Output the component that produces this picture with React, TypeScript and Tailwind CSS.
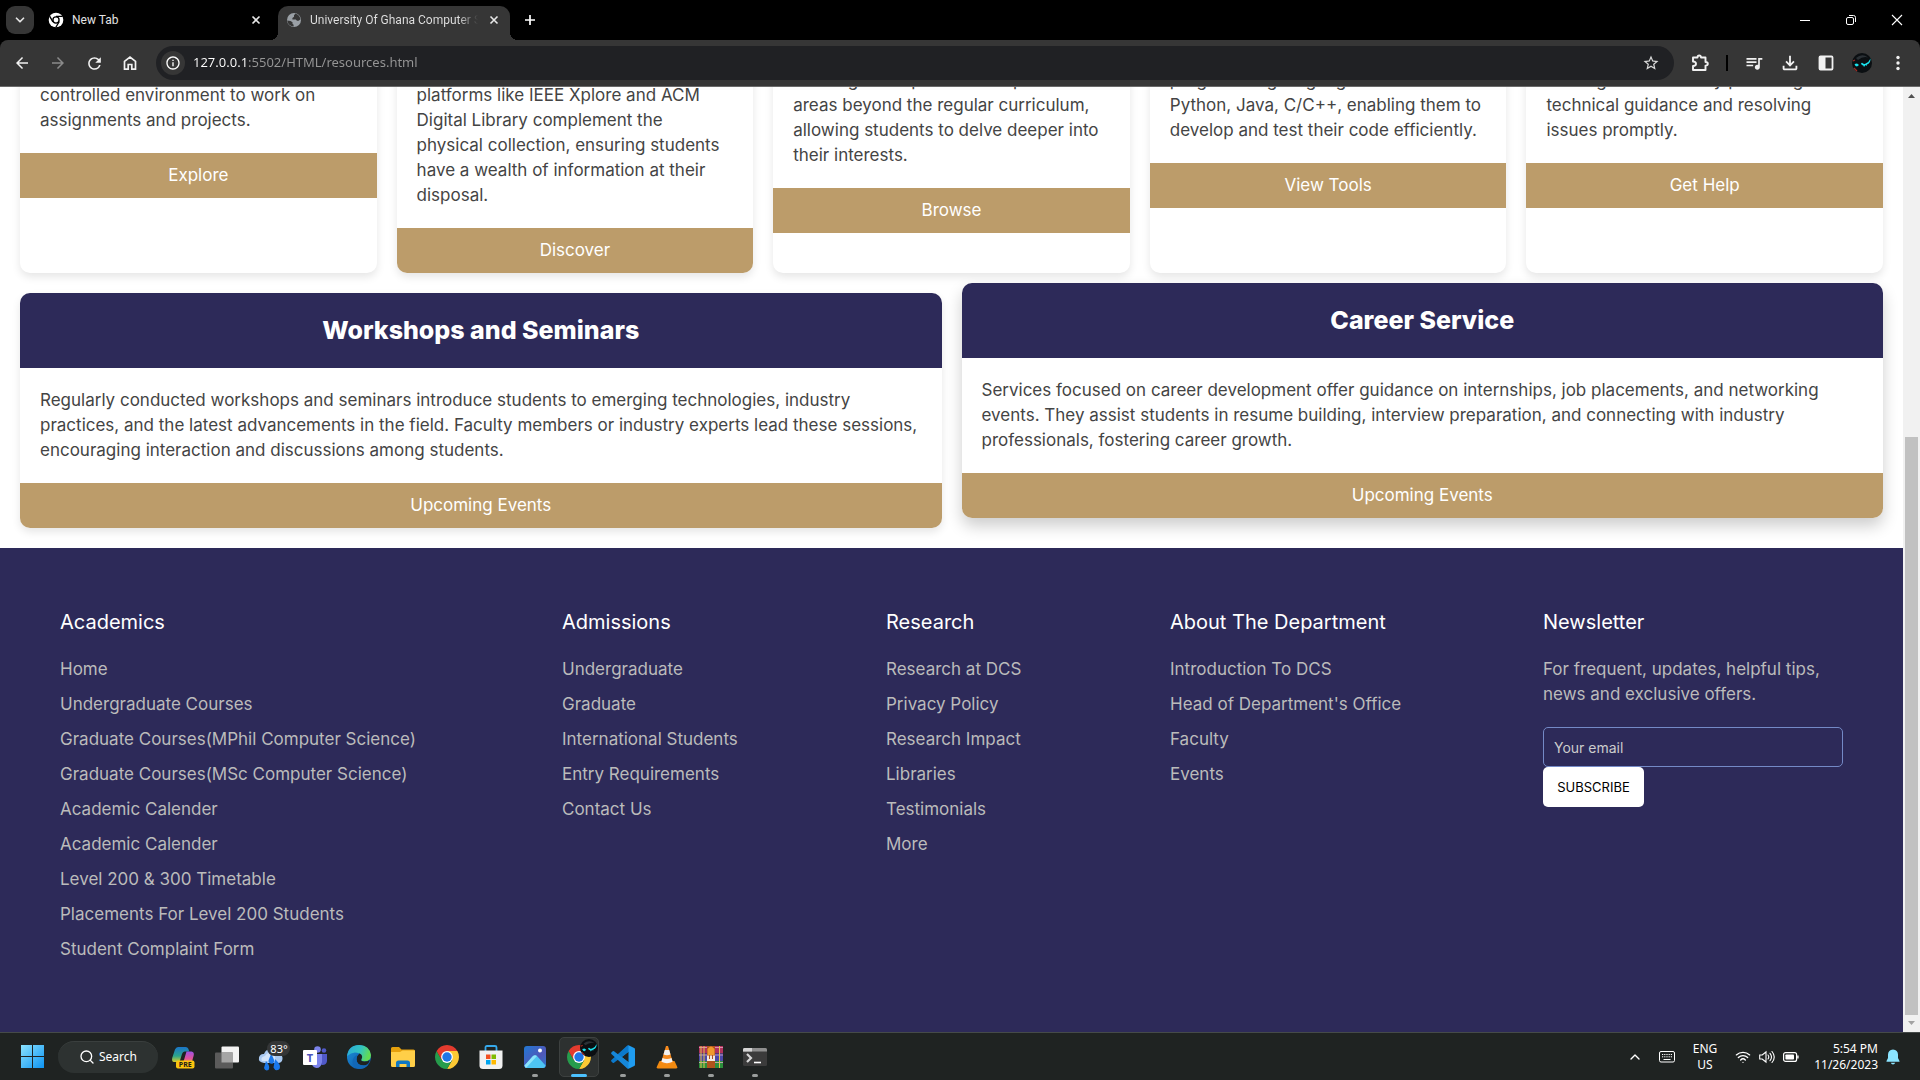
import type { ReactNode } from "react";
import { MdArrowBack, MdArrowForward, MdInfoOutline, MdOutlineFileDownload, MdQueueMusic, MdRefresh, MdStarBorder } from "react-icons/md";
import { ChevronDown, ChevronUp, Search, Wifi } from "lucide-react";

/* ---------- Browser chrome ---------- */

function ChromeMono() {
  return (
    <svg viewBox="0 0 24 24" className="size-4" aria-hidden="true">
      <circle cx="12" cy="12" r="11" fill="#fff" />
      <circle cx="12" cy="12" r="4.6" fill="#fff" stroke="#000" strokeWidth="2" />
      <path d="M12 6.6H22M7.4 14.8 2.4 6.2M16.7 14.6 11.6 23.3" stroke="#000" strokeWidth="2" />
    </svg>
  );
}

function Globe() {
  return (
    <svg viewBox="0 0 16 16" className="size-4" aria-hidden="true">
      <circle cx="8" cy="8" r="7" fill="#9aa0a6" />
      <path d="M9.5 1.6 8 3.2v1.6L6.4 6v1.4h3.4l1.2 1.4h1.6l1.8-1.2A7 7 0 0 0 9.5 1.6ZM1.3 8.5l3.2.4 2 1.4v1.5l1.1 1v1.8A6.4 6.4 0 0 1 1.3 8.5Z" fill="#363636" />
    </svg>
  );
}

function CloseIcon() {
  return (
    <svg viewBox="0 0 10 10" className="size-2.5" aria-hidden="true">
      <path d="M1.5 1.5 8.5 8.5M8.5 1.5 1.5 8.5" stroke="#e8e8e8" strokeWidth="1.6" />
    </svg>
  );
}

function TabStrip() {
  return (
    <header className="flex h-10 shrink-0 items-stretch bg-black font-['Roboto',sans-serif] text-xs text-[#e3e3e3]">
      <button aria-label="Search tabs" className="mt-1.5 ml-1.5 flex size-7 items-center justify-center rounded-[9px] bg-[#363636]">
        <ChevronDown className="size-3.5" strokeWidth={3} />
      </button>
      <div className="ml-3.5 flex w-[230px] items-center pr-[17px]">
        <ChromeMono />
        <button className="ml-2 flex-1 text-left">New Tab</button>
        <button aria-label="Close New Tab"><CloseIcon /></button>
      </div>
      <div className="relative mt-1.5 flex w-[232px] items-center rounded-t-[10px] bg-[#363636] pr-[11px] pb-1.5 pl-2">
        <span className="absolute bottom-0 -left-2 size-2 bg-[radial-gradient(circle_at_0_0,#000_8px,#363636_8px)]" />
        <span className="absolute -right-2 bottom-0 size-2 bg-[radial-gradient(circle_at_100%_0,#000_8px,#363636_8px)]" />
        <Globe />
        <button className="ml-2 flex-1 overflow-hidden bg-[linear-gradient(90deg,#e3e3e3_148px,transparent_168px)] bg-clip-text text-left whitespace-nowrap text-transparent">
          University Of Ghana Computer S
        </button>
        <button aria-label="Close University Of Ghana" className="ml-2"><CloseIcon /></button>
      </div>
      <button aria-label="New tab" className="ml-[14px] w-3">
        <svg viewBox="0 0 12 12" className="size-3" aria-hidden="true">
          <path d="M6 1v10M1 6h10" stroke="#fff" strokeWidth="1.7" />
        </svg>
      </button>
      <div className="ml-auto flex">
        <button aria-label="Minimize" className="flex w-[46px] items-center justify-center">
          <svg viewBox="0 0 10 10" className="size-2.5" aria-hidden="true"><path d="M0 5.5h10" stroke="#fff" /></svg>
        </button>
        <button aria-label="Restore" className="flex w-[46px] items-center justify-center">
          <svg viewBox="0 0 12 12" className="size-3" fill="none" stroke="#fff" aria-hidden="true">
            <rect x="1.5" y="3.5" width="7" height="7" rx="1.5" />
            <path d="M4 1.5h4.5a2 2 0 0 1 2 2V8" />
          </svg>
        </button>
        <button aria-label="Close window" className="flex w-[46px] items-center justify-center">
          <svg viewBox="0 0 12 12" className="size-3" aria-hidden="true"><path d="M1 1 11 11M11 1 1 11" stroke="#fff" strokeWidth="1.1" /></svg>
        </button>
      </div>
    </header>
  );
}

function ToolButton({ label, children }: { label: string; children: ReactNode }) {
  return (
    <button aria-label={label} className="flex h-8 w-9 items-center justify-center text-[#f1f1f1]">
      {children}
    </button>
  );
}

function Avatar() {
  return (
    <svg viewBox="0 0 20 20" className="size-5" aria-hidden="true">
      <circle cx="10" cy="10" r="10" fill="#0b0f12" />
      <path d="M4 5Q10 0 16 4.500Q11 3 6 7Z" fill="#2b3136" />
      <path d="M9 10.500Q10 9 11 10.500 12.500 11.500 14.500 10 16.500 9.500 18.500 5.500 18.500 10.500 15 11.500L14.500 13 13.500 12 12 14 11.300 12.500Q9.500 12.500 9 10.500Z" fill="#19e3ee" />
      <path d="M2.500 11 5 10.500 7 12 5 13.500 3.500 13Z" fill="#19e3ee" />
      <path d="M1 8 3 7M2 15 5 18" stroke="#a02a22" strokeWidth="1.200" />
    </svg>
  );
}

function Toolbar() {
  return (
    <div className="shrink-0 bg-black">
      <div className="flex h-[47px] items-center rounded-t-lg border-b border-[#6a6a6a] bg-[#363636] px-1">
        <ToolButton label="Back"><MdArrowBack className="size-[18px]" /></ToolButton>
        <button aria-label="Forward" disabled className="flex h-8 w-9 items-center justify-center text-[#8a8a8a]">
          <MdArrowForward className="size-[18px]" />
        </button>
        <ToolButton label="Reload"><MdRefresh className="size-[19px]" /></ToolButton>
        <ToolButton label="Home">
          <svg viewBox="0 0 16 16" className="size-4" fill="none" stroke="currentColor" strokeWidth="1.700" aria-hidden="true">
            <path d="M2.500 14.200V6.300L8 2l5.500 4.300v7.900H9.800V9.500H6.200v4.700Z" />
          </svg>
        </ToolButton>
        <div className="ml-2 flex h-[34px] flex-1 items-center rounded-full bg-[#202124] px-[5px]">
          <button aria-label="View site information" className="flex size-6 items-center justify-center rounded-full bg-[#363636] text-white">
            <MdInfoOutline className="size-4" />
          </button>
          <input
            aria-label="Address"
            defaultValue="127.0.0.1:5502/HTML/resources.html"
            className="ml-2 flex-1 bg-[linear-gradient(90deg,#fff_55px,#969696_55px)] bg-clip-text text-[13px] text-transparent outline-none"
          />
          <button aria-label="Bookmark this tab" className="flex w-9 items-center justify-center text-[#dadada]">
            <MdStarBorder className="size-[18px]" />
          </button>
        </div>
        <div className="ml-2 flex items-center">
          <ToolButton label="Extensions">
            <svg viewBox="0 0 20 20" className="size-5" fill="none" stroke="currentColor" strokeWidth="1.900" strokeLinejoin="round" aria-hidden="true">
              <path d="M3 4.500H7.500Q7.500 2.500 9.200 2.500T11 4.500H15.500V9Q17.800 9 17.800 10.800T15.500 12.600V17H3V13Q6 13 6 10.800T3 8.500Z" />
            </svg>
          </ToolButton>
          <span className="mx-2 h-4 w-0.5 bg-black" />
          <ToolButton label="Media controls"><MdQueueMusic className="size-5" /></ToolButton>
          <ToolButton label="Downloads"><MdOutlineFileDownload className="size-[22px]" /></ToolButton>
          <ToolButton label="Side panel">
            <svg viewBox="0 0 16 16" className="size-4" aria-hidden="true">
              <rect x="1.500" y="1.500" width="13" height="13" rx="1" fill="none" stroke="currentColor" strokeWidth="1.800" />
              <path d="M1.500 1.500H7.500V14.500H1.500Z" fill="currentColor" />
            </svg>
          </ToolButton>
          <ToolButton label="Profile"><Avatar /></ToolButton>
          <ToolButton label="Menu">
            <svg viewBox="0 0 16 16" className="size-4" fill="currentColor" aria-hidden="true">
              <circle cx="8" cy="2.500" r="1.700" /><circle cx="8" cy="8" r="1.700" /><circle cx="8" cy="13.500" r="1.700" />
            </svg>
          </ToolButton>
        </div>
      </div>
    </div>
  );
}

/* ---------- Page ---------- */

const resources = [
  { lines: ["controlled environment to work on", "assignments and projects."], action: "Explore", raised: false },
  {
    lines: ["platforms like IEEE Xplore and ACM", "Digital Library complement the", "physical collection, ensuring students", "have a wealth of information at their", "disposal."],
    action: "Discover",
    raised: false,
  },
  { lines: ["learning on a specialised topic", "areas beyond the regular curriculum,", "allowing students to delve deeper into", "their interests."], action: "Browse", raised: true },
  { lines: ["programming languages like", "Python, Java, C/C++, enabling them to", "develop and test their code efficiently."], action: "View Tools", raised: true },
  { lines: ["training students daily providing", "technical guidance and resolving", "issues promptly."], action: "Get Help", raised: true },
];

const programmes = [
  {
    title: "Workshops and Seminars",
    lines: [
      "Regularly conducted workshops and seminars introduce students to emerging technologies, industry",
      "practices, and the latest advancements in the field. Faculty members or industry experts lead these sessions,",
      "encouraging interaction and discussions among students.",
    ],
    hovered: false,
  },
  {
    title: "Career Service",
    lines: [
      "Services focused on career development offer guidance on internships, job placements, and networking",
      "events. They assist students in resume building, interview preparation, and connecting with industry",
      "professionals, fostering career growth.",
    ],
    hovered: true,
  },
];

const footerColumns = [
  {
    title: "Academics",
    width: "w-[355px]",
    links: ["Home", "Undergraduate Courses", "Graduate Courses(MPhil Computer Science)", "Graduate Courses(MSc Computer Science)", "Academic Calender", "Academic Calender", "Level 200 & 300 Timetable", "Placements For Level 200 Students", "Student Complaint Form"],
  },
  { title: "Admissions", width: "w-[177px]", links: ["Undergraduate", "Graduate", "International Students", "Entry Requirements", "Contact Us"] },
  { title: "Research", width: "w-[137px]", links: ["Research at DCS", "Privacy Policy", "Research Impact", "Libraries", "Testimonials", "More"] },
  { title: "About The Department", width: "w-[226px]", links: ["Introduction To DCS", "Head of Department's Office", "Faculty", "Events"] },
];

function CardText({ lines }: { lines: string[] }) {
  return (
    <p className="text-[17px] leading-[25px] whitespace-nowrap text-[#444]">
      {lines.map((line) => (
        <span key={line} className="block">{line}</span>
      ))}
    </p>
  );
}

function CardLink({ children }: { children: ReactNode }) {
  return (
    <a href="#" className="block bg-[#bc9c6a] py-2.5 text-center text-[17px] leading-[25px] text-white">
      {children}
    </a>
  );
}

function PageContent() {
  return (
    <main className="flex min-w-0 flex-1 flex-col justify-end overflow-hidden bg-white font-['Inter',sans-serif]">
      <section className="grid grid-cols-5 gap-5 px-5">
        {resources.map((card) => (
          <article key={card.action} className="min-w-0 overflow-hidden rounded-[10px] bg-white shadow-[0_4px_8px_rgba(0,0,0,0.1)]">
            <div className={card.raised ? "px-5 pt-2.5 pb-5" : "px-5 pt-[25px] pb-5"}>
              <CardText lines={card.lines} />
            </div>
            <CardLink>{card.action}</CardLink>
          </article>
        ))}
      </section>
      <section className="grid grid-cols-2 gap-5 p-5">
        {programmes.map((item) => (
          <article
            key={item.title}
            className={
              item.hovered
                ? "-translate-y-2.5 overflow-hidden rounded-[10px] bg-white shadow-[0_8px_16px_rgba(0,0,0,0.2)]"
                : "overflow-hidden rounded-[10px] bg-white shadow-[0_4px_8px_rgba(0,0,0,0.1)]"
            }
          >
            <h3 className="bg-[#2d2a59] py-5 text-center text-[25px] leading-[35px] font-extrabold text-white">{item.title}</h3>
            <div className="p-5">
              <CardText lines={item.lines} />
            </div>
            <CardLink>Upcoming Events</CardLink>
          </article>
        ))}
      </section>
      <footer className="flex justify-between bg-[#2d2a59] p-[60px] text-[17px] leading-[25px] text-[#bbb]">
        {footerColumns.map((column) => (
          <nav key={column.title} aria-label={column.title} className={column.width}>
            <h4 className="mb-5 text-xl leading-[29px] text-white">{column.title}</h4>
            <ul>
              {column.links.map((link, index) => (
                <li key={index} className="mb-2.5 whitespace-nowrap">
                  <a href="#" className="block">{link}</a>
                </li>
              ))}
            </ul>
          </nav>
        ))}
        <form className="w-[300px]">
          <h4 className="mb-5 text-xl leading-[29px] text-white">Newsletter</h4>
          <p className="mb-5 whitespace-nowrap">
            For frequent, updates, helpful tips,<br />news and exclusive offers.
          </p>
          <input
            type="email"
            aria-label="Your email"
            placeholder="Your email"
            className="block h-10 w-full rounded-[5px] border border-[#7489c6] bg-transparent px-2.5 text-sm text-white placeholder:text-[#ccc]"
          />
          <button type="button" className="h-10 w-[101px] rounded-[5px] bg-white text-[13px] text-black">SUBSCRIBE</button>
        </form>
      </footer>
    </main>
  );
}

function Scrollbar() {
  return (
    <div className="flex w-[17px] shrink-0 flex-col items-center bg-[#f1f1f1]" aria-hidden="true">
      <svg viewBox="0 0 17 17" className="size-[17px] shrink-0"><path d="M5 11 8.500 7 12 11Z" fill="#505050" /></svg>
      <div className="grow-[333]" />
      <div className="w-[13px] grow-[578] bg-[#c1c1c1]" />
      <svg viewBox="0 0 17 17" className="size-[17px] shrink-0"><path d="M5 6 8.500 10 12 6Z" fill="#a3a3a3" /></svg>
    </div>
  );
}

/* ---------- Taskbar ---------- */

function CopilotIcon() {
  return (
    <svg viewBox="0 0 24 24" className="size-6" aria-hidden="true">
      <defs>
        <linearGradient id="cp1" x1="0" y1="0" x2="0" y2="1"><stop stopColor="#1b74c9" /><stop offset=".6" stopColor="#2ba58c" /><stop offset="1" stopColor="#d8cf2b" /></linearGradient>
        <linearGradient id="cp2" x1="0" y1="0" x2="0" y2="1"><stop stopColor="#9d52e5" /><stop offset=".6" stopColor="#e0529a" /><stop offset="1" stopColor="#f39a56" /></linearGradient>
      </defs>
      <path d="M7 2H14.500Q17 2 17.800 5L18.200 6.500H13.500Q11.800 6.500 11 9L9 15.500Q8.400 17 7 17H3Q.5 17 1.200 13L4 4.500Q5 2 7 2Z" fill="url(#cp1)" />
      <path d="M15.500 6.500H20.500Q23.500 7 22.700 10.500L21 16.500Q20.300 18 18 18H11Q12.500 17 13 15Z" fill="url(#cp2)" />
      <rect x="5" y="15.500" width="18.500" height="8" rx="2" fill="#fcc40e" />
      <text x="14.300" y="22.200" textAnchor="middle" fontSize="7" fontWeight="700" fill="#1b1b1b">PRE</text>
    </svg>
  );
}

function TaskViewIcon() {
  return (
    <svg viewBox="0 0 24 24" className="size-6" aria-hidden="true">
      <rect x="6.500" y="1.500" width="17.500" height="16" rx="1" fill="#f3f3f3" />
      <rect x="0" y="7.500" width="18" height="16" rx="1" fill="#5b5b5b" />
      <path d="M6.500 7.500H18V17.500H6.500Z" fill="#a5a5a5" />
    </svg>
  );
}

function WeatherIcon() {
  return (
    <svg viewBox="0 0 38 32" className="h-8 w-[38px] shrink-0" aria-hidden="true">
      <path d="M12 22Q6 21 7 16.500 8 12.500 12 13 14 7.500 20 8 25 9 26 13 31 13.500 30.500 18 30 22 26 22Z" fill="#a9c9f1" />
      <path d="M10 20Q8 16 13 15 16 10 21 12 24 15 23 20Z" fill="#d3e4fa" />
      <path d="M19 13Q24 20 21 22.500 17 23.500 16.500 19.500ZM14 20Q19 26 16.500 29 13 30.500 12 27ZM23 18Q29.500 24 27.500 28 23.500 31 21.500 26.500Z" fill="#1a78ea" />
      <rect x="15" y="0" width="23" height="15" rx="7.500" fill="#343637" />
      <text x="27" y="11.500" textAnchor="middle" fontSize="11" fill="#fff">83°</text>
    </svg>
  );
}

function TeamsIcon() {
  return (
    <svg viewBox="0 0 24 24" className="size-6" aria-hidden="true">
      <circle cx="14.500" cy="4.500" r="3.300" fill="#7b83eb" />
      <circle cx="21" cy="5.500" r="2.300" fill="#5059c9" />
      <path d="M16 9H24V16Q23.500 20.500 18.500 20Z" fill="#5059c9" />
      <path d="M9 9H19V17Q18 23 13.500 23 9.500 22.500 8.500 18Z" fill="#7b83eb" />
      <rect x="0" y="5" width="14" height="15" rx="1" fill="#fff" />
      <text x="7" y="16.500" textAnchor="middle" fontSize="11" fontWeight="700" fill="#4b53bc">T</text>
    </svg>
  );
}

function EdgeIcon() {
  return (
    <svg viewBox="0 0 24 24" className="size-6" aria-hidden="true">
      <defs>
        <linearGradient id="ed1" x1="0" y1="0" x2="1" y2=".3"><stop stopColor="#2aa8dc" /><stop offset=".6" stopColor="#33c4c0" /><stop offset="1" stopColor="#62db53" /></linearGradient>
        <linearGradient id="ed2" x1="0" y1="0" x2="1" y2="1"><stop stopColor="#1c92dd" /><stop offset="1" stopColor="#0b4e9e" /></linearGradient>
      </defs>
      <circle cx="12" cy="12" r="12" fill="url(#ed2)" />
      <path d="M.1 11Q1.500 0 12.500 0 22.500.5 24 10 24 16 17.500 16.500 13 16.300 14.500 14 16.500 10.500 12.500 8.500 6 5.500 .1 11Z" fill="url(#ed1)" />
      <path d="M14.500 14Q13 16.300 17.500 16.500 20.500 16.500 22.800 15Q22 19 18 20.500 10 21.500 9.500 14.500 9.500 10.500 12.500 8.500 16.500 10.500 14.500 14Z" fill="#1e2322" />
      <path d="M9.500 14.500Q10 21 18.500 20.300L21.500 19.500Q18 24 12 24 5.500 22.500 5.500 16.500 6 11 12.500 8.500 9.500 10.500 9.500 14.500Z" fill="#1268b8" />
    </svg>
  );
}

function ExplorerIcon() {
  return (
    <svg viewBox="0 0 24 24" className="size-6" aria-hidden="true">
      <path d="M0 3.500Q0 2 1.500 2H8L10.500 4.500H22.500Q24 4.500 24 6V14H0Z" fill="#e5a00d" />
      <path d="M0 7H9L11.500 5.500H24V20.500Q24 22 22.500 22H1.500Q0 22 0 20.500Z" fill="#ffcf48" />
      <path d="M5 22V18Q5 15.500 7.500 15.500H16.500Q19 15.500 19 18V22H15.500V19H8.500V22Z" fill="#0f78c4" />
    </svg>
  );
}

function ChromeIcon() {
  return (
    <svg viewBox="0 0 24 24" className="size-6" aria-hidden="true">
      <path d="M12 6H22.390A12 12 0 0 1 12 24L17.200 15Z" fill="#fcc934" />
      <path d="M1.610 6A12 12 0 0 0 12 24L17.200 15 12 17.800 6.800 15Z" fill="#269c4c" />
      <path d="M1.610 6A12 12 0 0 1 22.390 6H12L6.800 15Z" fill="#e33b2e" />
      <circle cx="12" cy="12" r="5.900" fill="#fff" />
      <circle cx="12" cy="12" r="4.700" fill="#1f76e8" />
    </svg>
  );
}

function StoreIcon() {
  return (
    <svg viewBox="0 0 24 24" className="size-6" aria-hidden="true">
      <path d="M6.500 6V2.500Q6.500 1 8 1H16Q17.500 1 17.500 2.500V6" fill="none" stroke="#35a9ec" strokeWidth="1.800" />
      <path d="M.5 5.500H23.500V20.500Q23.500 24 20 24H4Q.5 24 .5 20.500Z" fill="#f1f1f1" />
      <path d="M7 9.500H11.500V14H7Z" fill="#f25022" /><path d="M12.500 9.500H17V14H12.500Z" fill="#7fba00" />
      <path d="M7 15H11.500V19.500H7Z" fill="#00a4ef" /><path d="M12.500 15H17V19.500H12.500Z" fill="#ffb900" />
    </svg>
  );
}

function PhotosIcon() {
  return (
    <svg viewBox="0 0 24 24" className="size-6" aria-hidden="true">
      <defs><linearGradient id="ph" x1="0" y1="0" x2="1" y2="1"><stop stopColor="#2178d4" /><stop offset=".6" stopColor="#5057b8" /><stop offset="1" stopColor="#2b79cc" /></linearGradient></defs>
      <rect x="1" y="1" width="22" height="22" rx="3" fill="url(#ph)" />
      <path d="M1.500 20.500 10 11Q12 9.500 14 11L22.500 20.500Q22 23 20 23H4Q2 23 1.500 20.500Z" fill="#4dc4f3" />
      <path d="M1.500 20.500 10 11Q12 9.500 14 11L3 23Q1.800 22 1.500 20.500Z" fill="#8ce3fb" />
      <circle cx="17" cy="5.500" r="2" fill="#fff" />
    </svg>
  );
}

function VsCodeIcon() {
  return (
    <svg viewBox="0 0 24 24" className="size-6" aria-hidden="true">
      <path d="M17.500.3 23.200 2.900Q24 3.300 24 4.200V19.800Q24 20.700 23.200 21.100L17.500 23.700 4.700 12Z" fill="#1f9cf0" />
      <path d="M17.500 6.800V17.200L10.800 12Z" fill="#1f2322" />
      <path d="M17.500.3V6.800L3 17.800Q2.300 18.200 1.700 17.700L.4 16.500Q-.2 15.700.4 15.100L16.300.6Q16.800.1 17.500.3Z" fill="#0b79cc" />
      <path d="M17.500 23.700V17.200L3 6.200Q2.300 5.800 1.700 6.300L.4 7.500Q-.2 8.300.4 8.900L16.300 23.400Q16.800 23.900 17.500 23.700Z" fill="#1687d9" />
    </svg>
  );
}

function VlcIcon() {
  return (
    <svg viewBox="0 0 24 24" className="size-6" aria-hidden="true">
      <path d="M4.500 16H19.500L22.500 22.500Q22 23.500 21 23.500H3Q2 23.500 1.500 22.500Z" fill="#f28a10" />
      <path d="M11 1H13L18 17.500Q12 21 6 17.500Z" fill="#f58a1f" />
      <path d="M9.800 5H14.200L15.500 9.500Q12 11 8.500 9.500ZM7.500 13Q12 15 16.500 13L17.600 16.800Q12 19.500 6.400 16.800Z" fill="#f2f2f2" />
    </svg>
  );
}

function WinRarIcon() {
  return (
    <svg viewBox="0 0 24 24" className="size-6" aria-hidden="true">
      <path d="M0 1H24V8.500H0Z" fill="#b0325d" /><path d="M0 8.500H24V16H0Z" fill="#4a47a8" /><path d="M0 16H24V23H0Z" fill="#2c8f3c" />
      <path d="M0 2.500H24M0 10H24M0 17.500H24" stroke="#e2a9c0" strokeWidth=".8" />
      <path d="M2 1V23M5 1V23M20.500 1V23" stroke="#e2c14c" strokeWidth="1" />
      <path d="M8 1H16V23H8Z" fill="#b0531d" />
      <path d="M8.500 4Q12-1 15.500 4V10H8.500Z" fill="#f09a2c" />
      <path d="M8 10.500H10V14H11V10.500H13V14H14V10.500H16V16H8Z" fill="#f3e9dd" />
    </svg>
  );
}

function TerminalIcon() {
  return (
    <svg viewBox="0 0 24 24" className="size-6" aria-hidden="true">
      <rect x="0" y="3" width="24" height="18" rx="1.500" fill="#3b3b3b" />
      <path d="M0 6.500V4.500Q0 3 1.500 3H22.500Q24 3 24 4.500V6.500Z" fill="#8f8f8f" />
      <path d="M0 6.500V4.500Q0 3 1.500 3H9V6.500Z" fill="#d4d4d4" />
      <path d="M4 9 8 13 4 17" fill="none" stroke="#d6d6d6" strokeWidth="2.200" /><path d="M11 17.500H18" stroke="#fff" strokeWidth="1.600" />
    </svg>
  );
}

const apps = [
  { name: "Copilot", icon: <CopilotIcon />, running: false },
  { name: "Task view", icon: <TaskViewIcon />, running: false },
  { name: "Weather", icon: <WeatherIcon />, running: false },
  { name: "Teams", icon: <TeamsIcon />, running: false },
  { name: "Edge", icon: <EdgeIcon />, running: false },
  { name: "File Explorer", icon: <ExplorerIcon />, running: false },
  { name: "Chrome", icon: <ChromeIcon />, running: false },
  { name: "Store", icon: <StoreIcon />, running: false },
  { name: "Photos", icon: <PhotosIcon />, running: true },
  { name: "Chrome profile", icon: <ChromeIcon />, running: true, active: true },
  { name: "Visual Studio Code", icon: <VsCodeIcon />, running: true },
  { name: "VLC", icon: <VlcIcon />, running: true },
  { name: "WinRAR", icon: <WinRarIcon />, running: true },
  { name: "Terminal", icon: <TerminalIcon />, running: true },
];

function Taskbar() {
  return (
    <footer className="flex h-12 shrink-0 items-center border-t border-[#454a49] bg-[#1f2322] pr-5 pl-2.5 text-white">
      <button aria-label="Start" className="flex w-11 justify-center">
        <svg viewBox="0 0 23 23" className="size-[23px]" aria-hidden="true">
          <defs><linearGradient id="win" x1="0" y1="0" x2="1" y2="1"><stop stopColor="#8be3ff" /><stop offset="1" stopColor="#0d93f2" /></linearGradient></defs>
          <path d="M0 0H11V11H0ZM12 0H23V11H12ZM0 12H11V23H0ZM12 12H23V23H12Z" fill="url(#win)" />
        </svg>
      </button>
      <button className="ml-1 flex h-8 w-[100px] items-center justify-center gap-1 rounded-full border-t border-[#3a3f3e] bg-[#2d3231] text-xs">
        <Search className="size-4" />
        Search
      </button>
      <nav aria-label="Applications" className="ml-[3px] flex">
        {apps.map((app) => (
          <button
            key={app.name}
            aria-label={app.name}
            className={
              app.active
                ? "relative mx-0.5 flex h-10 w-10 items-center justify-center rounded-[5px] border border-[#3d4140] bg-[#2d3130]"
                : "relative flex h-10 w-11 items-center justify-center"
            }
          >
            {app.icon}
            {app.active && <span className="absolute top-0 right-0 flex size-[18px]"><Avatar /></span>}
            {app.running && (
              <span className={app.active ? "absolute -bottom-px h-[3px] w-4 rounded-full bg-[#4cc2ff]" : "absolute bottom-0 h-[3px] w-1.5 rounded-full bg-[#9a9d9c]"} />
            )}
          </button>
        ))}
      </nav>
      <div className="ml-auto flex items-center text-xs leading-4">
        <button aria-label="Show hidden icons" className="flex w-8 justify-center"><ChevronUp className="size-4" /></button>
        <button aria-label="Touch keyboard" className="flex w-8 justify-center">
          <svg viewBox="0 0 16 12" className="h-3 w-4" fill="none" stroke="#fff" aria-hidden="true">
            <rect x=".5" y=".5" width="15" height="10.500" rx="1.500" />
            <path d="M3 3.500H13M3 5.800H13" strokeDasharray="1.200 1" /><path d="M4.500 8.500H11.500" />
          </svg>
        </button>
        <button className="w-11 text-center">ENG<br />US</button>
        <button aria-label="Network, volume and battery" className="ml-2 flex items-center gap-2">
          <Wifi className="size-4" />
          <svg viewBox="0 0 16 16" className="size-4" fill="none" stroke="#fff" strokeWidth="1.100" strokeLinecap="round" aria-hidden="true">
            <path d="M.7 6V10H3.200L7 13V3L3.200 6ZM9 6Q10.500 8 9 10M11 4.300Q14 8 11 11.700M13 2.500Q17.500 8 13 13.500" />
          </svg>
          <svg viewBox="0 0 16 16" className="size-4" aria-hidden="true">
            <rect x=".6" y="3.600" width="13" height="8.800" rx="2" fill="none" stroke="#fff" strokeWidth="1.200" />
            <rect x="2.400" y="5.400" width="8.600" height="5.200" rx=".8" fill="#fff" /><path d="M14.900 6.500V9.500" stroke="#fff" strokeWidth="1.400" />
          </svg>
        </button>
        <button className="w-[79px] text-right">5:54 PM<br />11/26/2023</button>
        <button aria-label="Notifications" className="ml-2">
          <svg viewBox="0 0 14 16" className="h-4 w-3.5" fill="#8be4ff" aria-hidden="true">
            <path d="M7 .5Q11.800.8 12 5.500V9L13.500 12V12.800H.5V12L2 9V5.500Q2.200.8 7 .5ZM4.800 13.700H9.200Q8.600 15.500 7 15.500T4.800 13.700Z" />
          </svg>
        </button>
      </div>
    </footer>
  );
}

export default function App() {
  return (
    <div className="flex h-screen flex-col overflow-hidden font-['Noto_Sans',sans-serif]">
      <TabStrip />
      <Toolbar />
      <div className="flex min-h-0 flex-1">
        <PageContent />
        <Scrollbar />
      </div>
      <Taskbar />
    </div>
  );
}
